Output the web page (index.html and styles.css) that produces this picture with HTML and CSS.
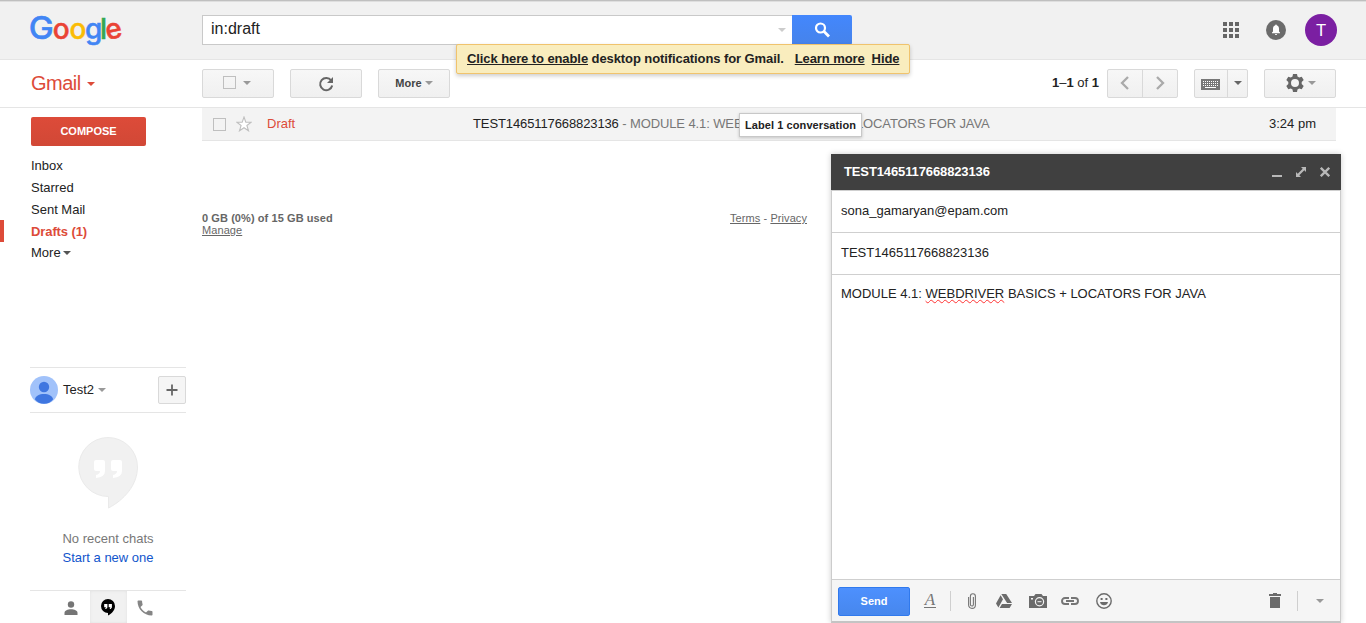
FILE: index.html
```html
<!DOCTYPE html>
<html lang="en">
<head>
<meta charset="utf-8">
<title>Gmail</title>
<link rel="stylesheet" href="styles.css">
</head>
<body>
<div class="app">
  <header class="header">
    <svg class="logo" width="110" height="40" viewBox="0 0 110 40">
      <g font-family="Inter, Roboto, sans-serif" font-size="28" font-weight="500" stroke-width=".5">
        <text x=".8" y="28.500" fill="#4285f4" stroke="#4285f4" font-size="31" textLength="25" lengthAdjust="spacingAndGlyphs">G</text>
        <text x="24.800" y="28.500" fill="#ea4335" stroke="#ea4335">o</text>
        <text x="41.500" y="28.500" fill="#fbbc05" stroke="#fbbc05">o</text>
        <text x="57" y="28.500" fill="#4285f4" stroke="#4285f4">g</text>
        <text x="72" y="28.500" fill="#34a853" stroke="#34a853">l</text>
        <text x="77.500" y="28.500" fill="#ea4335" stroke="#ea4335" transform="rotate(-12 86 21)">e</text>
      </g>
    </svg>
    <div class="search">
      <div class="search-field"><span>in:draft</span><i class="caret caret-light"></i></div>
      <div class="search-button">
        <svg width="18" height="18" viewBox="0 0 18 18"><circle cx="7.500" cy="7" r="4.500" fill="none" stroke="#fff" stroke-width="2.200"/><path d="M10.800 10.300L16 15.500" stroke="#fff" stroke-width="2.800"/></svg>
      </div>
    </div>
    <div class="account">
      <svg width="16" height="16" viewBox="0 0 16 16" fill="#666"><path d="M0 0h4v4H0zM6 0h4v4H6zM12 0h4v4h-4zM0 6h4v4H0zM6 6h4v4H6zM12 6h4v4h-4zM0 12h4v4H0zM6 12h4v4H6zM12 12h4v4h-4z"/></svg>
      <svg width="20" height="20" viewBox="0 0 20 20"><circle cx="10" cy="10" r="10" fill="#6b6b6b"/><path fill="#fff" d="M6 13.300v-.7l1-1V8.700C7 7 7.800 5.900 9.200 5.600V5.200a.8.800 0 0 1 1.600 0v.4C12.200 5.900 13 7 13 8.700v2.900l1 1v.7zM8.900 13.900h2.200a1.100 1.100 0 0 1-2.200 0z"/></svg>
      <div class="avatar">T</div>
    </div>
  </header>

  <div class="notice"><u>Click here to enable</u><span> desktop notifications for Gmail.</span><u class="learn">Learn more</u><u class="hide">Hide</u></div>

  <div class="toolbar">
    <div class="brand">Gmail<i class="caret caret-red"></i></div>
    <div class="button select"><i class="checkbox"></i><i class="caret"></i></div>
    <div class="button">
      <svg width="16" height="16" viewBox="0 0 16 16"><path d="M13.200 4.500A6.100 6.100 0 1 0 14.200 9.500" fill="none" stroke="#666" stroke-width="2"/><path d="M15 1v6H9z" fill="#666"/></svg>
    </div>
    <div class="button more">More<i class="caret"></i></div>
    <div class="tools">
      <div class="count"><b>1</b>–<b>1</b> of <b>1</b></div>
      <div class="button pager">
        <span><svg width="10" height="14" viewBox="0 0 10 14"><path d="M8 1L2 7l6 6" fill="none" stroke="#aaa" stroke-width="2.300"/></svg></span>
        <span><svg width="10" height="14" viewBox="0 0 10 14"><path d="M2 1l6 6-6 6" fill="none" stroke="#aaa" stroke-width="2.300"/></svg></span>
      </div>
      <div class="button input-tools">
        <span><svg width="19" height="11" viewBox="0 0 19 11"><path fill="#777" d="M0 0h19v11H0z"/><path d="M2 2.500h15M2 4.500h15M2 6.500h15" stroke="#fff" stroke-dasharray="1 1"/><path d="M4 8.500h11" stroke="#fff"/></svg></span>
        <span><i class="caret caret-dark"></i></span>
      </div>
      <div class="button gear">
        <svg width="18" height="18" viewBox="0 0 18 18"><path fill="#666" fill-rule="evenodd" d="M7 0h4l.5 2.600 1.700 1 2.500-.9 2 3.400-2 1.800v2.200l2 1.800-2 3.400-2.500-.9-1.700 1L11 18H7l-.5-2.600-1.700-1-2.500.9-2-3.400 2-1.800V7.900l-2-1.800 2-3.400 2.500.9 1.700-1zM9 5a4 4 0 1 0 0 8 4 4 0 0 0 0-8z"/></svg>
        <i class="caret"></i>
      </div>
    </div>
  </div>

  <div class="body">
    <nav class="sidebar">
      <div class="compose-button">COMPOSE</div>
      <div class="folders">
        <a>Inbox</a><a>Starred</a><a>Sent Mail</a><a class="current">Drafts (1)</a><a class="last">More<i class="caret caret-black"></i></a>
      </div>
      <div class="chat">
        <div class="chat-user">
          <svg width="28" height="28" viewBox="0 0 28 28"><circle cx="14" cy="14" r="14" fill="#a1c2fa"/><circle cx="14" cy="11" r="5.200" fill="#3f76e0"/><path d="M5 23.500C5 16 23 16 23 23.500c-4 5.700-14 5.700-18 0z" fill="#3f76e0"/></svg>
          <span>Test2</span><i class="caret"></i>
          <div class="plus"><svg width="12" height="12" viewBox="0 0 12 12"><path d="M6 .5v11M.5 6h11" stroke="#666" stroke-width="1.800"/></svg></div>
        </div>
        <div class="chat-empty">
          <svg width="60" height="72" viewBox="0 0 60 72"><path d="M30 .5a29.500 29.500 0 1 0 .5 59V71C46 63 59.500 48 59.500 30A29.500 29.500 0 0 0 30 .5z" fill="#f1f1f1" stroke="#eaeaea"/><path d="M18 23h7q2 0 2 2v9q0 6-9 7v-3q4-1 4-4h-4q-2 0-2-2v-7q0-2 2-2zM35 23h7q2 0 2 2v9q0 6-9 7v-3q4-1 4-4h-4q-2 0-2-2v-7q0-2 2-2z" fill="#fff"/></svg>
          <div class="none">No recent chats</div>
          <div class="start">Start a new one</div>
        </div>
        <div class="chat-tabs">
          <span><svg width="14" height="14" viewBox="0 0 14 14" fill="#757575"><circle cx="7" cy="3.500" r="3.200"/><path d="M.5 14v-2c0-5 13-5 13 0v2z"/></svg></span>
          <span class="active"><svg width="14" height="17" viewBox="0 0 14 17"><path d="M7 0a7 7 0 1 0 0 14v2.500c4-2 7-5.500 7-9.500a7 7 0 0 0-7-7z" fill="#000"/><path d="M3.200 5h3.200v3.500L5.200 10H4.100l.8-1.700H3.200zM7.700 5h3.200v3.500L9.700 10H8.600l.8-1.700H7.700z" fill="#fff"/></svg></span>
          <span><svg width="20" height="20" viewBox="0 0 24 24" fill="#858585"><path d="M6.600 10.800c1.400 2.800 3.800 5.100 6.600 6.600l2.200-2.200c.3-.3.700-.4 1-.2 1.100.4 2.300.6 3.600.6.600 0 1 .4 1 1V20c0 .6-.4 1-1 1C10.600 21 3 13.400 3 4c0-.6.500-1 1-1h3.500c.6 0 1 .5 1 1 0 1.300.2 2.500.6 3.600.1.400 0 .7-.2 1z"/></svg></span>
        </div>
      </div>
    </nav>

    <main class="main">
      <div class="mail-row">
        <i class="checkbox"></i>
        <svg class="star" width="16" height="16" viewBox="0 0 16 16"><path d="M8 1l1.800 5.100 5.400.1-4.300 3.300 1.600 5.300L8 11.700l-4.500 3.100 1.600-5.300L.8 6.200l5.400-.1z" fill="#fff" stroke="#bfbfbf" stroke-width="1.100"/></svg>
        <span class="from">Draft</span>
        <span class="subject">TEST1465117668823136<span class="snippet"> - MODULE 4.1: WEBDRIVER BASICS + LOCATORS FOR JAVA</span></span>
        <span class="time">3:24 pm</span>
        <div class="tooltip">Label 1 conversation</div>
      </div>
      <footer class="footer">
        <div><b>0 GB (0%) of 15 GB used</b><br><u>Manage</u></div>
        <div class="legal"><u>Terms</u> - <u>Privacy</u></div>
      </footer>
    </main>
  </div>

  <section class="compose">
    <div class="compose-head">
      <span>TEST1465117668823136</span>
      <svg width="10" height="10" viewBox="0 0 10 10"><path d="M0 8h10v2H0z" fill="#b8b8b8"/></svg>
      <svg width="10" height="10" viewBox="0 0 10 10" fill="#b8b8b8"><path d="M5 0h5v5L8.300 3.300 3.300 8.300 5 10H0V5l1.700 1.700 5-5z"/></svg>
      <svg width="10" height="10" viewBox="0 0 10 10"><path d="M.8.800l8.400 8.400M9.200.800L.8 9.200" stroke="#b8b8b8" stroke-width="2.300"/></svg>
    </div>
    <div class="field">sona_gamaryan@epam.com</div>
    <div class="field subject-field">TEST1465117668823136</div>
    <div class="message">MODULE 4.1: <span class="misspelt">WEBDRIVER</span> BASICS + LOCATORS FOR JAVA</div>
    <div class="compose-foot">
      <div class="send">Send</div>
      <span class="format">A</span>
      <i class="rule"></i>
      <div class="attachments">
        <svg width="8" height="16" viewBox="0 0 8 16"><path d="M.6 4v8a3.400 3.400 0 0 0 6.800 0V3.200a2.500 2.500 0 0 0-5 0v8.300a1.500 1.500 0 0 0 3 0V4" fill="none" stroke="#757575" stroke-width="1.100"/></svg>
        <svg width="16" height="14" viewBox="0 0 16 14" fill="#6b6b6b"><path d="M5.300 0h4.900L16 9h-4.900zM4.600 1.200L7 5.200 2.400 13.500 0 9.500zM6 10h10l-2.400 4H3.600z"/></svg>
        <svg width="18" height="14" viewBox="0 0 18 14"><path fill="#6b6b6b" d="M0 2h5l1.500-2h6L14 2h4v12H0z"/><circle cx="10.500" cy="7.700" r="4.100" fill="#6b6b6b" stroke="#f5f5f5" stroke-width="1.200"/><path d="M8.500 7.700h4" stroke="#f5f5f5"/><path d="M2 4h2v1.500H2z" fill="#f5f5f5"/></svg>
        <svg width="18" height="8" viewBox="0 0 18 8"><path d="M8 1H4a3 3 0 0 0 0 6h4M10 1h4a3 3 0 0 1 0 6h-4M5 4h8" fill="none" stroke="#757575" stroke-width="1.900"/></svg>
        <svg width="16" height="16" viewBox="0 0 16 16"><circle cx="8" cy="8" r="7.200" fill="none" stroke="#6b6b6b" stroke-width="1.400"/><path d="M4.600 5h2v2h-2zM9.400 5h2v2h-2zM4 9h8c-.8 4.300-7.200 4.300-8 0z" fill="#6b6b6b"/></svg>
      </div>
      <svg class="trash" width="12" height="15" viewBox="0 0 12 15"><path fill="#6b6b6b" d="M0 1h4V0h4v1h4v2H0zM1 4h10v11H1z"/></svg>
      <i class="rule"></i>
      <i class="caret"></i>
    </div>
  </section>
</div>
</body>
</html>
```
FILE: styles.css
```css
* { box-sizing: border-box; }
body { margin: 0; background: #fff; color: #222; font: 13px/22px "Liberation Sans", Arial, sans-serif; }
svg { display: block; flex: none; }
.app { position: relative; height: 623px; overflow: hidden; display: flex; flex-direction: column; }

.caret { display: inline-block; flex: none; border: 4px solid transparent; border-top-color: #999; border-bottom: 0; }
.caret-light { border-top-color: #ccc; }
.caret-red { border-top-color: #dd4b39; }
.caret-dark { border-top-color: #666; }
.caret-black { border-top-color: #555; margin-left: 2px; vertical-align: 2px; }
.checkbox { width: 13px; height: 13px; border: 1px solid #bfbfbf; background: transparent; flex: none; }

.header { height: 60px; flex: none; display: flex; align-items: flex-start; background: #f1f1f1; border-top: 1px solid #bfbfbf; border-bottom: 1px solid #e5e5e5; box-shadow: inset 0 1px 0 #dedede; }
.logo { margin: 9px 64px 0 28px; }
.search { display: flex; margin-top: 14px; }
.search-field { width: 590px; height: 30px; padding: 0 6px 0 8px; display: flex; justify-content: space-between; align-items: center; background: #fff; border: 1px solid #c9c9c9; border-right: 0; font-size: 16px; line-height: 26px; }
.search-field span { height: 28px; }
.search-button { width: 60px; height: 30px; display: flex; align-items: center; justify-content: center; background: linear-gradient(#4387fd, #4683ea); border-radius: 0 2px 2px 0; }
.account { margin: 13px 29px 0 auto; display: flex; align-items: center; }
.account svg { margin-right: 27px; }
.account svg + svg { margin-right: 19px; }
.avatar { width: 32px; height: 32px; border-radius: 50%; background: #7b1fa2; color: #fff; text-align: center; font: 17px/33px Roboto, sans-serif; }

.notice { position: absolute; left: 456px; top: 44px; width: 454px; height: 30px; padding-left: 10px; display: flex; white-space: pre; background: #f9edbe; border: 1px solid #f0c36d; border-radius: 2px; box-shadow: 0 2px 4px rgba(0,0,0,.2); font-weight: bold; line-height: 27px; letter-spacing: -.09px; z-index: 2; }
.learn { margin-left: 11px; }
.hide { margin-left: 7px; }

.toolbar { height: 48px; flex: none; display: flex; align-items: flex-start; padding: 9px 30px 0 31px; border-bottom: 1px solid #e5e5e5; }
.brand { width: 155px; margin-right: 16px; color: #dd4b39; font-size: 20px; line-height: 29px; letter-spacing: -.5px; display: flex; align-items: center; gap: 6px; }
.button { width: 72px; height: 29px; margin-right: 16px; display: flex; align-items: center; justify-content: center; gap: 7px; border: 1px solid #d9d9d9; border-radius: 2px; background: linear-gradient(#f7f7f7, #f0f0f0); }
.select { padding: 0 3px 2px 0; }
.more { gap: 3px; padding-bottom: 2px; color: #444; font-size: 11px; font-weight: bold; }
.tools { display: flex; margin-left: auto; }
.count { margin-right: 8px; line-height: 28px; }
.pager, .input-tools { gap: 0; align-items: stretch; }
.pager { width: 71px; }
.pager svg { margin-bottom: 2px; }
.input-tools { width: 54px; }
.button > span { flex: 1; display: flex; align-items: center; justify-content: center; }
.button > span + span { border-left: 1px solid #d9d9d9; }
.input-tools > span:first-child { padding-right: 2px; padding-top: 2px; }
.input-tools > span + span { flex: 0 0 20px; padding-bottom: 2px; }
.gear { margin-right: 0; gap: 4px; padding: 0 0 2px 2px; }

.body { flex: 1; display: flex; min-height: 0; }
.sidebar { width: 202px; flex: none; display: flex; flex-direction: column; padding-top: 9px; }
.compose-button { width: 115px; height: 29px; margin-left: 31px; background: linear-gradient(#dd4b39, #d14836); border-radius: 2px; color: #fff; font-size: 11px; font-weight: bold; line-height: 28px; text-align: center; }
.folders { display: flex; flex-direction: column; padding-top: 8px; }
.folders a { height: 22px; padding-left: 31px; line-height: 24px; }
.folders .current { color: #dd4b39; font-weight: bold; letter-spacing: -.1px; padding-left: 27px; border-left: 4px solid #dd4b39; }
.folders .last { line-height: 22px; }
.chat { width: 156px; flex: 1; margin: 103px 0 0 30px; display: flex; flex-direction: column; border-top: 1px solid #e5e5e5; }
.chat-user { height: 45px; display: flex; align-items: center; border-bottom: 1px solid #e5e5e5; }
.chat-user span { margin: 0 4px 0 5px; }
.plus { width: 28px; height: 28px; margin-left: auto; display: flex; align-items: center; justify-content: center; border: 1px solid #d9d9d9; border-radius: 2px; background: #f5f5f5; }
.chat-empty { flex: 1; display: flex; flex-direction: column; align-items: center; padding-top: 24px; line-height: 19px; }
.none { margin-top: 20px; color: #777; }
.start { color: #15c; }
.chat-tabs { height: 33px; display: flex; justify-content: center; border-top: 1px solid #e5e5e5; }
.chat-tabs span { width: 37px; display: flex; align-items: center; justify-content: center; padding-top: 1px; }
.chat-tabs .active { background: #f1f1f1; box-shadow: inset 0 0 3px #e0e0e0; }

.main { flex: 1; padding-right: 30px; }
.mail-row { position: relative; height: 33px; display: flex; align-items: center; padding: 0 20px 0 11px; background: #f3f3f3; border-bottom: 1px solid #e5e5e5; white-space: pre; }
.star { margin: 0 15px 0 10px; }
.from { width: 206px; color: #dd4b39; }
.subject { letter-spacing: -.11px; }
.snippet { color: #777; }
.time { margin-left: auto; }
.from, .subject, .time { height: 22px; }
.tooltip { position: absolute; left: 537px; top: 5px; width: 123px; height: 24px; background: #fff; border: 1px solid #c8c8c8; box-shadow: 0 1px 3px rgba(0,0,0,.2); font-size: 11px; font-weight: bold; line-height: 23px; text-align: center; letter-spacing: .08px; }
.footer { width: 605px; margin-top: 71px; display: flex; justify-content: space-between; color: #666; font-size: 11px; line-height: 12px; letter-spacing: .08px; }

.compose { position: absolute; left: 831px; top: 154px; width: 510px; height: 469px; display: flex; flex-direction: column; background: #fff; border: 1px solid #ccc; border-top: 0; border-bottom: 2px solid #c4c4c4; box-shadow: 0 0 6px rgba(0,0,0,.2); }
.compose-head { height: 36px; margin: 0 -1px; padding: 0 11px 0 13px; display: flex; align-items: center; background: #404040; color: #fff; font-weight: bold; line-height: 36px; letter-spacing: -.12px; }
.compose-head span { margin-right: auto; height: 36px; }
.compose-head svg { margin-left: 14px; }
.field { height: 43px; padding-left: 9px; border-top: 1px solid #cfcfcf; border-bottom: 1px solid #cfcfcf; line-height: 40px; }
.subject-field { height: 42px; border-top: 0; }
.message { flex: 1; padding: 8px 9px; }
.misspelt { text-decoration: underline wavy #f33 1px; text-underline-offset: 1px; text-decoration-skip-ink: none; }
.compose-foot { height: 42px; display: flex; align-items: center; padding: 0 17px 0 6px; background: #f5f5f5; border-top: 1px solid #cfcfcf; }
.send { width: 72px; height: 29px; margin-top: 2px; background: linear-gradient(#4d90fe, #4787ed); border: 1px solid #3079ed; border-radius: 2px; color: #fff; font-size: 11px; font-weight: bold; line-height: 27px; text-align: center; }
.format { margin-left: 14px; width: 12px; height: 15px; border-bottom: 1px solid #757575; color: #757575; font: italic 17px/13px "Liberation Serif", serif; text-align: center; }
.rule { width: 1px; height: 20px; margin: 0 17px 0 14px; background: #cfcfcf; }
.attachments { display: flex; align-items: center; }
.attachments svg { margin-right: 17px; }
.attachments svg:first-child { margin-right: 20px; }
.attachments svg:nth-child(3) { margin-right: 14px; }
.trash { margin-left: auto; }
.trash + .rule { margin: 0 18px 0 16px; }
.compose-foot .caret { margin-right: -1px; }
```
